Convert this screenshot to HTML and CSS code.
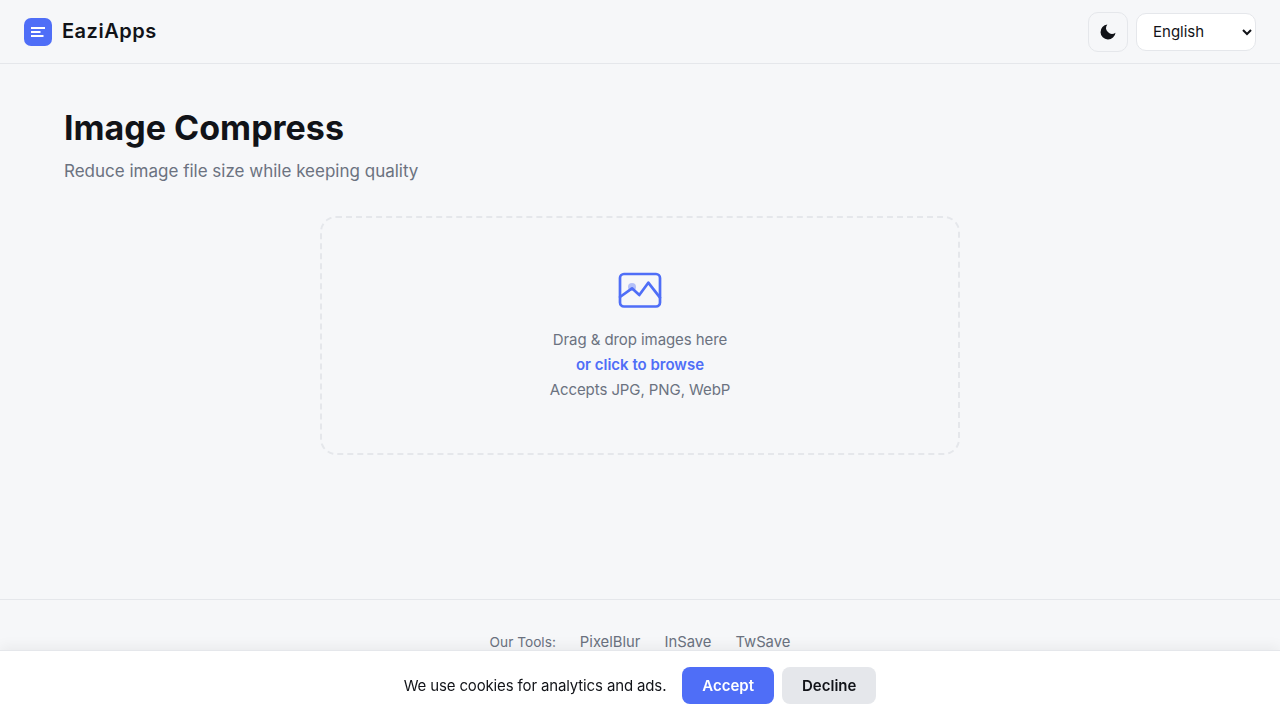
FILE: index.html
```html
<!DOCTYPE html>
<html lang="en">
<head>
  <meta charset="UTF-8" />
  <title>Image Compress - EaziApps</title>
  <meta name="viewport" content="width=device-width, initial-scale=1.0" />
  <link rel="stylesheet" href="styles.css">
</head>
<body>

  <header class="topbar">
    <a class="brand" href="#">
      <span class="brand-icon">
        <svg width="16" height="16" viewBox="0 0 16 16" fill="none" stroke="#fff" stroke-width="2">
          <path d="M1 4h14M1 8h9.500M1 12h12.500" />
        </svg>
      </span>
      <span class="brand-name">EaziApps</span>
    </a>
    <div class="topbar-actions">
      <button class="theme-btn" aria-label="Toggle theme">
        <svg width="20" height="20" viewBox="0 0 24 24" fill="#111318">
          <path d="M21 12.790A9 9 0 1 1 11.210 3 7 7 0 0 0 21 12.790z" />
        </svg>
      </button>
      <select class="lang-select">
        <option>English</option>
      </select>
    </div>
  </header>

  <main class="content">
    <h1>Image Compress</h1>
    <p class="subtitle">Reduce image file size while keeping quality</p>

    <div class="dropzone">
      <svg class="drop-icon" width="48" height="48" viewBox="0 0 48 48" fill="none" stroke="#4f6ef7" stroke-width="2.700" stroke-linejoin="round" stroke-linecap="round">
        <circle cx="16" cy="20" r="4" fill="#4f6ef7" fill-opacity="0.4" stroke="none" />
        <rect x="4" y="7" width="40" height="32.500" rx="4" />
        <path d="M4 30l12-8.700 7.300 6.700 9-12.300 11.700 15" />
      </svg>
      <p class="drop-line">Drag &amp; drop images here</p>
      <p class="drop-line drop-link">or click to browse</p>
      <p class="drop-line">Accepts JPG, PNG, WebP</p>
    </div>
  </main>

  <footer class="site-footer">
    <span class="footer-label">Our Tools:</span>
    <a href="#">PixelBlur</a>
    <a href="#">InSave</a>
    <a href="#">TwSave</a>
  </footer>

  <div class="cookie-bar">
    <span class="cookie-text">We use cookies for analytics and ads.</span>
    <button class="cookie-btn accept">Accept</button>
    <button class="cookie-btn decline">Decline</button>
  </div>

</body>
</html>
```

FILE: styles.css
```css
* {
  box-sizing: border-box;
}

body {
  margin: 0;
  font-family: Inter, 'Noto Sans', sans-serif;
  background: #f6f7f9;
  color: #111318;
}

p, h1 {
  margin: 0;
}

a {
  color: inherit;
  text-decoration: none;
}

.topbar {
  height: 64px;
  padding: 0 24px;
  display: flex;
  justify-content: space-between;
  align-items: center;
  border-bottom: 1px solid #e5e7eb;
}

.brand {
  display: flex;
  align-items: center;
  gap: 10px;
}

.brand-icon {
  width: 28px;
  height: 28px;
  border-radius: 7px;
  background: #4f6ef7;
  display: flex;
  justify-content: center;
  align-items: center;
}

.brand-name {
  font-size: 20px;
  line-height: 26px;
  font-weight: 600;
  letter-spacing: 0.5px;
  margin-top: -2px;
}

.topbar-actions {
  display: flex;
  align-items: center;
  gap: 8px;
}

.theme-btn {
  width: 40px;
  height: 40px;
  padding: 0;
  border: 1px solid #e5e7eb;
  border-radius: 10px;
  background: #f6f7f9;
  display: flex;
  justify-content: center;
  align-items: center;
}

.lang-select {
  width: 120px;
  height: 38px;
  padding: 0 8px 0 12px;
  border: 1px solid #e5e7eb;
  border-radius: 10px;
  background: #fff;
  color: #111318;
  font-family: inherit;
  font-size: 15px;
}

.content {
  height: 535px;
  padding: 40px 64px;
}

h1 {
  font-size: 34px;
  line-height: 48px;
  font-weight: 700;
}

.subtitle {
  margin-top: 7px;
  font-size: 17px;
  line-height: 24px;
  color: #6b7280;
}

.dropzone {
  width: 640px;
  height: 239px;
  margin: 33px auto 0;
  padding-top: 49px;
  border: 2px dashed #e5e7eb;
  border-radius: 16px;
  text-align: center;
}

.drop-icon {
  display: block;
  margin: 0 auto 12px;
}

.drop-line {
  font-size: 15px;
  line-height: 25px;
  letter-spacing: -0.08px;
  color: #6b7280;
}

.drop-link {
  color: #4f6ef7;
  font-weight: 600;
  letter-spacing: 0;
}

.site-footer {
  padding: 32px 0 60px;
  border-top: 1px solid #e5e7eb;
  display: flex;
  justify-content: center;
  align-items: center;
  gap: 24px;
  font-size: 14.8px;
  line-height: 20px;
  color: #6b7280;
}

.footer-label {
  font-size: 13.7px;
}

.cookie-bar {
  position: fixed;
  left: 0;
  right: 0;
  bottom: 0;
  height: 70px;
  background: #fff;
  border-top: 1px solid #e5e7eb;
  box-shadow: 0 -4px 12px rgba(0, 0, 0, 0.05);
  display: flex;
  justify-content: center;
  align-items: center;
  gap: 8px;
}

.cookie-text {
  margin-right: 8px;
  font-size: 15px;
  letter-spacing: -0.14px;
}

.cookie-btn {
  height: 37px;
  padding: 0 20px;
  border: none;
  border-radius: 8px;
  font-family: inherit;
  font-size: 15px;
  font-weight: 600;
}

.accept {
  background: #4f6ef7;
  color: #fff;
}

.decline {
  background: #e5e7eb;
  color: #111318;
}
```
